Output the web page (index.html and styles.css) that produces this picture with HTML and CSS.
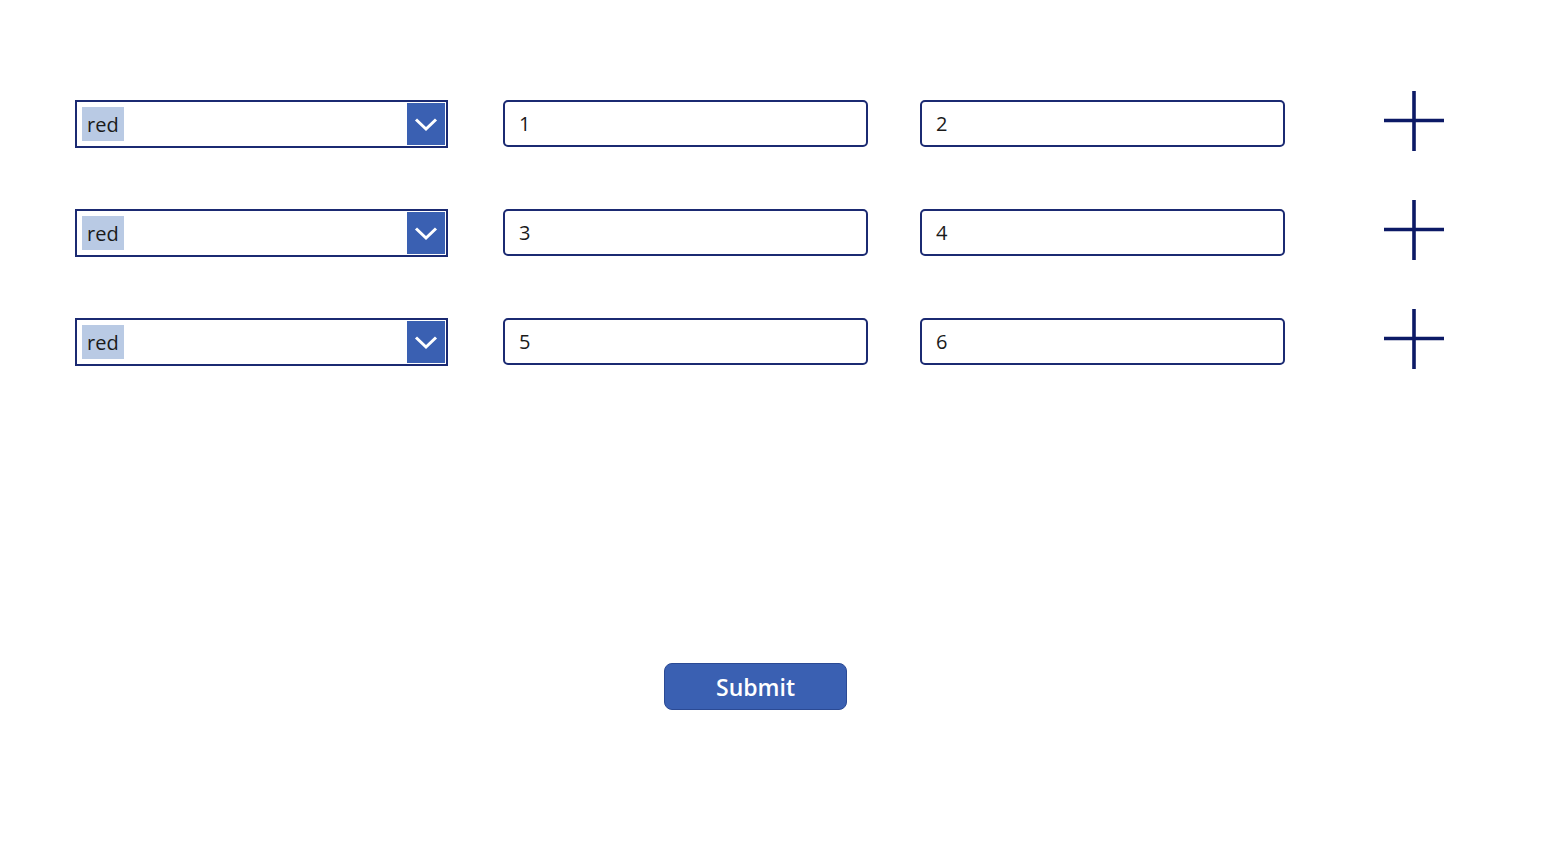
FILE: index.html
```html
<!DOCTYPE html>
<html lang="en">

<head>
    <title>Rows</title>
    <link rel="stylesheet" href="styles.css">
</head>

<body>
    <div class="rows">
        <div class="row">
            <div class="dropdown">
                <span class="selected">red</span>
                <span class="chevron">
                    <svg width="24" height="16" viewBox="0 0 24 16"><path d="M2 3.5 L12 13 L22 3.5" fill="none" stroke="white" stroke-width="3"/></svg>
                </span>
            </div>
            <input class="field" type="text" value="1">
            <input class="field" type="text" value="2">
            <button class="add"><svg width="60" height="60" viewBox="0 0 60 60"><path d="M30 0 V60 M0 29.5 H60" stroke="#0c1a66" stroke-width="3.6"/></svg></button>
        </div>
        <div class="row">
            <div class="dropdown">
                <span class="selected">red</span>
                <span class="chevron">
                    <svg width="24" height="16" viewBox="0 0 24 16"><path d="M2 3.5 L12 13 L22 3.5" fill="none" stroke="white" stroke-width="3"/></svg>
                </span>
            </div>
            <input class="field" type="text" value="3">
            <input class="field" type="text" value="4">
            <button class="add"><svg width="60" height="60" viewBox="0 0 60 60"><path d="M30 0 V60 M0 29.5 H60" stroke="#0c1a66" stroke-width="3.6"/></svg></button>
        </div>
        <div class="row">
            <div class="dropdown">
                <span class="selected">red</span>
                <span class="chevron">
                    <svg width="24" height="16" viewBox="0 0 24 16"><path d="M2 3.5 L12 13 L22 3.5" fill="none" stroke="white" stroke-width="3"/></svg>
                </span>
            </div>
            <input class="field" type="text" value="5">
            <input class="field" type="text" value="6">
            <button class="add"><svg width="60" height="60" viewBox="0 0 60 60"><path d="M30 0 V60 M0 29.5 H60" stroke="#0c1a66" stroke-width="3.6"/></svg></button>
        </div>
    </div>

    <div class="actions">
        <button class="submit">Submit</button>
    </div>
</body>
</html>
```

FILE: styles.css
```css
body,
html {
    margin: 0;
    padding: 0;
    background-color: white;
    font-family: 'Open Sans', 'Noto Sans', sans-serif;
}

.rows {
    display: flex;
    flex-direction: column;
    gap: 61px;
    padding: 100px 0 0 75px;
}

.row {
    display: flex;
    align-items: flex-start;
    height: 48px;
}

.dropdown {
    width: 373px;
    height: 48px;
    box-sizing: border-box;
    border: 2px solid #1b2a72;
    padding: 1px;
    display: flex;
    align-items: stretch;
}

.selected {
    margin: 4px 0 4px 4px;
    padding: 0 5px;
    background-color: #b9cae4;
    color: #1a1a1a;
    font-size: 20px;
    display: flex;
    align-items: center;
}

.chevron {
    margin-left: auto;
    width: 38px;
    background-color: #3a60b2;
    display: flex;
    align-items: center;
    justify-content: center;
}

.field {
    width: 365px;
    height: 47px;
    box-sizing: border-box;
    border: 2px solid #1b2a72;
    border-radius: 5px;
    padding: 0 14px;
    font-family: 'Open Sans', 'Noto Sans', sans-serif;
    font-size: 20px;
    color: #1a1a1a;
    outline: none;
}

.row .field:nth-child(2) {
    margin-left: 55px;
}

.row .field:nth-child(3) {
    margin-left: 52px;
}

.add {
    margin-left: 99px;
    margin-top: -9px;
    padding: 0;
    border: none;
    background: none;
    width: 60px;
    height: 60px;
}

.add svg {
    display: block;
}

.actions {
    display: flex;
    padding: 297px 0 0 664px;
}

.submit {
    width: 183px;
    height: 47px;
    box-sizing: border-box;
    border: 1px solid #2b4a94;
    border-radius: 8px;
    background-color: #3a60b2;
    color: white;
    font-family: 'Open Sans', 'Noto Sans', sans-serif;
    font-weight: 600;
    font-size: 23px;
}
```
